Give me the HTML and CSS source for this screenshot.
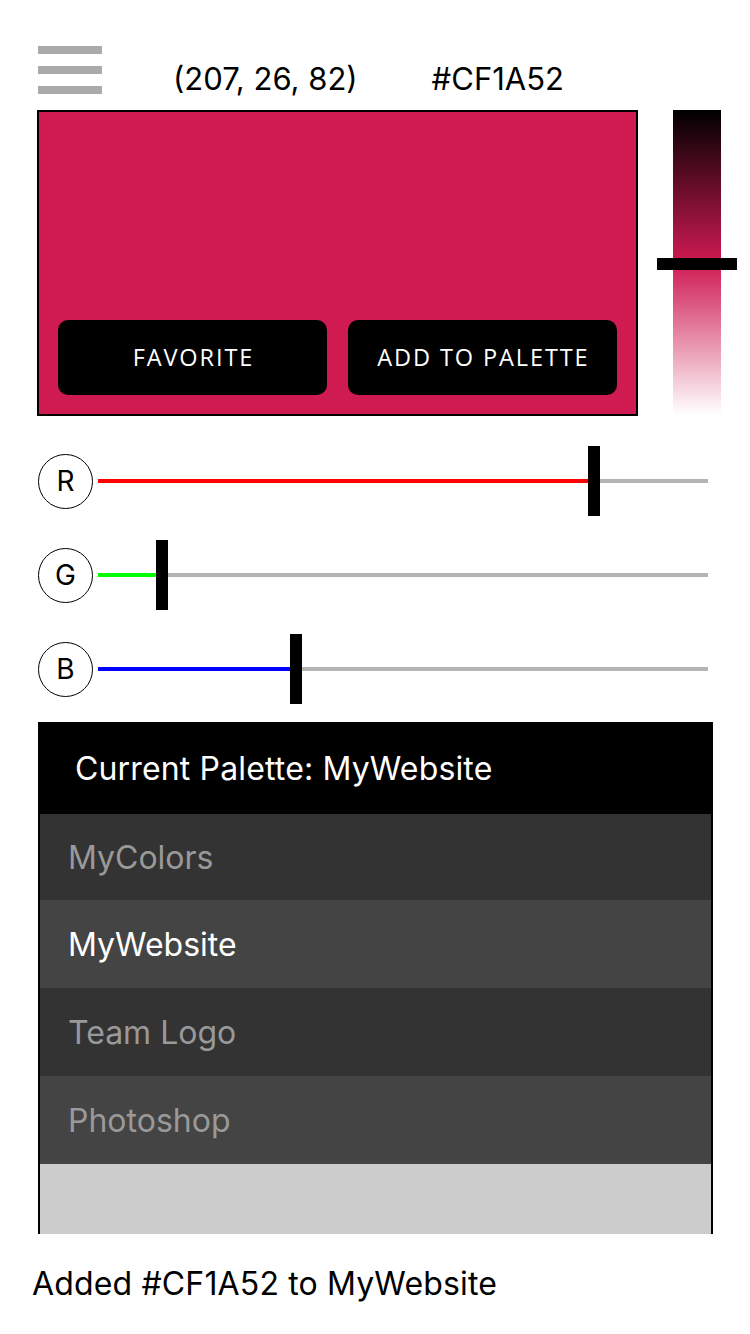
FILE: index.html
```html
<!DOCTYPE html>
<html>
<head>
<meta charset="utf-8">
<link rel="stylesheet" href="styles.css">
</head>
<body>
<div class="page">
  <header class="topbar">
    <div class="menu"><span></span><span></span><span></span></div>
    <div class="rgb">(207, 26, 82)</div>
    <div class="hex">#CF1A52</div>
  </header>

  <section class="picker">
    <div class="swatch">
      <button class="btn">FAVORITE</button>
      <button class="btn">ADD TO PALETTE</button>
    </div>
    <div class="shade">
      <div class="shade-thumb"></div>
    </div>
  </section>

  <section class="sliders">
    <div class="slider">
      <div class="label">R</div>
      <div class="track">
        <div class="fill red" style="width:490px"></div>
        <div class="thumb" style="left:490px"></div>
      </div>
    </div>
    <div class="slider">
      <div class="label">G</div>
      <div class="track">
        <div class="fill green" style="width:58px"></div>
        <div class="thumb" style="left:58px"></div>
      </div>
    </div>
    <div class="slider">
      <div class="label">B</div>
      <div class="track">
        <div class="fill blue" style="width:192px"></div>
        <div class="thumb" style="left:192px"></div>
      </div>
    </div>
  </section>

  <section class="palette">
    <div class="palette-head">Current Palette: MyWebsite</div>
    <div class="palette-body">
      <div class="row dark first">MyColors</div>
      <div class="row light active">MyWebsite</div>
      <div class="row dark">Team Logo</div>
      <div class="row light">Photoshop</div>
      <div class="filler"></div>
    </div>
  </section>

  <div class="status">Added #CF1A52 to MyWebsite</div>
</div>
</body>
</html>
```
FILE: styles.css
```css
html, body {
  margin: 0;
  padding: 0;
  background: #fff;
}
body {
  font-family: Inter, "Liberation Sans", sans-serif;
  width: 750px;
  height: 1334px;
  overflow: hidden;
}
.page {
  padding-left: 37px;
}
.topbar {
  display: flex;
  height: 110px;
  align-items: flex-start;
}
.menu {
  display: flex;
  flex-direction: column;
  gap: 12px;
  margin-top: 46px;
  margin-left: 1px;
  width: 64px;
}
.menu span {
  display: block;
  height: 8px;
  background: #aaaaaa;
}
.rgb, .hex {
  font-size: 31px;
  line-height: 36px;
  margin-top: 61px;
  color: #000;
}
.rgb { margin-left: 71px; }
.hex { margin-left: 74px; }

.picker {
  display: flex;
  align-items: flex-start;
}
.swatch {
  width: 559px;
  height: 283px;
  border: 2px solid #000;
  background: #cf1a52;
  display: flex;
  align-items: flex-end;
  gap: 21px;
  padding: 0 19px 19px 19px;
  box-sizing: content-box;
}
.btn {
  flex: 1;
  height: 75px;
  background: #000;
  color: #fff;
  border: none;
  border-radius: 10px;
  font-family: "Open Sans", "Noto Sans", sans-serif;
  font-size: 23.5px;
  letter-spacing: 1.9px;
  padding: 0 0 2px 1.9px;
}
.shade {
  position: relative;
  margin-left: 35px;
  width: 48px;
  height: 305px;
  background: linear-gradient(to bottom, #000 0%, #cf1a52 50%, #fff 100%);
}
.shade-thumb {
  position: absolute;
  left: -16px;
  top: 148px;
  width: 80px;
  height: 12px;
  background: #000;
}

.sliders {
  margin-top: 18px;
}
.slider {
  display: flex;
  align-items: center;
  height: 94px;
}
.label {
  width: 53px;
  height: 53px;
  margin-left: 1px;
  border: 1.5px solid #000;
  border-radius: 50%;
  display: flex;
  align-items: center;
  justify-content: center;
  font-size: 28px;
  color: #000;
}
.track {
  position: relative;
  margin-left: 5px;
  width: 610px;
  height: 4px;
  background: #b4b4b4;
}
.fill {
  height: 4px;
}
.red { background: #ff0000; }
.green { background: #00ff00; }
.blue { background: #0000ff; }
.thumb {
  position: absolute;
  top: -33px;
  width: 12px;
  height: 70px;
  background: #000;
}

.palette {
  margin-top: 6px;
  margin-left: 1px;
  width: 675px;
}
.palette-head {
  height: 92px;
  background: #000;
  color: #fff;
  font-size: 32px;
  letter-spacing: 0.15px;
  display: flex;
  align-items: center;
  padding-left: 37px;
}
.palette-body {
  border-left: 2px solid #000;
  border-right: 2px solid #000;
}
.row {
  height: 88px;
  display: flex;
  align-items: center;
  padding-left: 28px;
  font-size: 32px;
  color: #999999;
}
.row.first { height: 86px; }
.row.dark { background: #333333; }
.row.light { background: #444444; }
.row.active { color: #ffffff; }
.filler {
  height: 70px;
  background: #cccccc;
}
.status {
  margin-top: 30px;
  margin-left: -5px;
  font-size: 32px;
  letter-spacing: 0.15px;
  color: #000;
}
```
